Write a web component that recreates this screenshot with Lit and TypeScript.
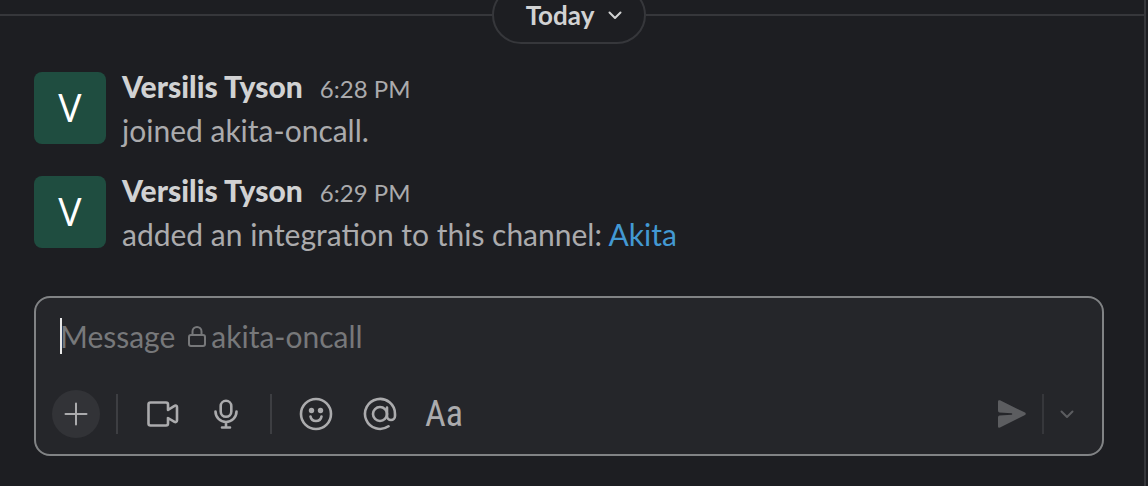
import { LitElement, html, css, svg } from "lit";
import { customElement, property, state } from "lit/decorators.js";

const icon = (width: number, height: number, body: unknown) => html`<svg width=${width} height=${height} viewBox="0 0 ${width} ${height}" fill="none" stroke="currentColor"
    stroke-width="3" stroke-linecap="round" stroke-linejoin="round" aria-hidden="true">${body}</svg>`;

const chevron = icon(16, 16, svg`<path stroke-width="2" d="M2.5 5.5 8 11l5.5-5.5"/>`);
const lock = icon(18, 22, svg`<g stroke-width="2"><rect x="1" y="10" width="16" height="11" rx="2"/><path d="M4.500 10V6.500a4.500 4.500 0 0 1 9 0V10"/></g>`);
const plus = icon(24, 24, svg`<path stroke-width="2" d="M12 1.500v21M1.500 12h21"/>`);
const video = icon(36, 32, svg`<path stroke-width="2.600" d="M6.500 4.500h15.500a2 2 0 0 1 2 2V12l6.500-4.200a1.600 1.600 0 0 1 2.500 1.300V22.500a1.600 1.600 0 0 1-2.500 1.300l-6.500-3.800v5.500a2 2 0 0 1-2 2H6.500a2 2 0 0 1-2-2v-19a2 2 0 0 1 2-2Z"/>`);
const mic = icon(28, 32, svg`<g stroke-width="2.600"><rect x="8.700" y="2.800" width="10.600" height="16" rx="5.300"/><path d="M3.500 13.500a10.500 10.500 0 0 0 21 0M14 24v5.500M10 29.500h8"/></g>`);
const smile = icon(36, 36, svg`<circle stroke-width="2.600" cx="18" cy="18" r="15"/><g fill="currentColor" stroke="none"><circle cx="13.500" cy="14.500" r="2.700"/><circle cx="22.500" cy="14.500" r="2.700"/></g><path stroke-width="2.600" d="M12.500 20.500a5.600 5.600 0 0 0 11 0"/>`);
const mention = icon(36, 36, svg`<g stroke-width="2.600"><circle cx="18" cy="18" r="7"/><path d="M25 11.500V20a4 4 0 0 0 8 0v-2a15 15 0 1 0-6.500 12.300"/></g>`);
const send = icon(30, 30, svg`<path fill="currentColor" stroke="none" d="M1 2.500C1 1.500 2 .900 3 1.300l25 12.300c1 .600 1 1.800 0 2.400L3 28.600c-1 .400-2-.200-2-1.200V18.500c0-1 .500-1.700 1.500-1.900l12-.800c1-.100 1-1.500 0-1.600l-12-.800C1.500 13.200 1 12.500 1 11.500Z"/>`);

@customElement("chat-message")
export class ChatMessage extends LitElement {
  @property() author = "";
  @property() time = "";

  static styles = css`
    :host { display: block; padding: 8px 34px; }
    .row { display: flex; gap: 16px; }
    .avatar {
      flex: none; display: grid; justify-items: center;
      width: 72px; height: 72px; margin-top: 8px; border-radius: 8px;
      background: #1f4d40; color: #fff; font: 400 39px/70px "Open Sans", sans-serif;
    }
    .content { min-width: 0; }
    .head { display: flex; align-items: baseline; gap: 17px; height: 44px; line-height: 44px; }
    .author { font-weight: 900; color: #d1d2d3; }
    .time { font-size: 24px; }
    .text { line-height: 44px; overflow-wrap: anywhere; }
  `;

  render() {
    return html`<article class="row">
      <div class="avatar" aria-hidden="true">${this.author.charAt(0)}</div>
      <div class="content">
        <div class="head"><span class="author">${this.author}</span><time class="time">${this.time}</time></div>
        <div class="text"><slot></slot></div>
      </div>
    </article>`;
  }
}

@customElement("message-composer")
export class MessageComposer extends LitElement {
  @property() channel = "";
  @state() private draft = "";

  static styles = css`
    :host { display: block; }
    .box { border: 2px solid #818385; border-radius: 16px; background: #25262a; }
    .entry { display: grid; padding: 16px 24px; }
    .input, .hint { grid-area: 1 / 1; font: inherit; line-height: 44px; }
    .input {
      width: 100%; height: 44px; box-sizing: border-box; padding: 0; border: 0; outline: 0;
      resize: none; background: transparent; color: #d1d2d3; overflow: hidden;
    }
    .hint { display: flex; align-items: center; color: #77787a; pointer-events: none; white-space: nowrap; }
    .hint svg { flex: none; margin: 0 5px 0 13px; }
    .caret { width: 2px; height: 36px; margin-right: -2px; background: #e8e8e8; }
    .tools { display: flex; align-items: center; padding: 16px 12px 16px 16px; }
    button {
      display: grid; place-items: center; width: 64px; height: 48px; padding: 0;
      border: 0; background: transparent; color: #ababad; font: inherit;
    }
    svg { display: block; }
    .add { width: 48px; border-radius: 50%; background: #323337; margin-right: 4px; }
    .rule { width: 2px; height: 40px; margin: 0 12px; background: #3d3e42; }
    .format { font: 400 36px/48px "Roboto Condensed", "Arial Narrow", Roboto, sans-serif; }
    .sending { display: flex; align-items: center; margin-left: auto; }
    .sending .rule { margin: 0; background: #36373b; }
    .sending button { color: #5c5d60; }
    .sending .send { width: 60px; }
    .sending .more { width: 46px; }
  `;

  private onInput(e: Event) {
    this.draft = (e.target as HTMLTextAreaElement).value;
  }

  render() {
    return html`<form class="box" @submit=${(e: Event) => e.preventDefault()}>
      <div class="entry">
        <textarea class="input" id="draft" rows="1" .value=${this.draft} @input=${this.onInput}></textarea>
        ${this.draft ? "" : html`<label class="hint" for="draft"><span class="caret"></span>Message ${lock}${this.channel}</label>`}
      </div>
      <div class="tools">
        <button type="button" class="add" aria-label="Attach">${plus}</button>
        <span class="rule"></span>
        <button type="button" aria-label="Record video clip">${video}</button>
        <button type="button" aria-label="Record audio clip">${mic}</button>
        <span class="rule"></span>
        <button type="button" aria-label="Emoji">${smile}</button>
        <button type="button" aria-label="Mention someone">${mention}</button>
        <button type="button" class="format" aria-label="Formatting">Aa</button>
        <div class="sending">
          <button type="submit" class="send" aria-label="Send now">${send}</button>
          <span class="rule"></span>
          <button type="button" class="more" aria-label="Schedule for later">${chevron}</button>
        </div>
      </div>
    </form>`;
  }
}

@customElement("app-root")
export class AppRoot extends LitElement {
  static styles = css`
    :host {
      display: block; min-height: 100vh; box-sizing: border-box; padding-right: 2px;
      overflow: hidden; background: #1d1e22; color: #ababad;
      font: 400 30px/44px Lato, sans-serif;
    }
    .pane { min-height: 100vh; box-sizing: border-box; border-right: 2px solid #36373b; display: flow-root; }
    .day { display: flex; align-items: center; margin: -14px 0 12px; }
    .day::before, .day::after { content: ""; flex: 1 1 0; height: 2px; background: #36373b; }
    .day::after { flex-basis: 6px; }
    .date {
      display: flex; align-items: center; gap: 13px; height: 58px; box-sizing: border-box; padding: 0 21px 0 32px;
      border: 2px solid #36373b; border-radius: 29px; background: transparent;
      color: #d1d2d3; font: 700 26px/28px Lato, sans-serif;
    }
    .link { color: #4399d3; text-decoration: none; }
    .composer { margin: 32px 40px 30px 34px; }
  `;

  render() {
    return html`<main class="pane">
      <div class="day"><button class="date" type="button">Today ${chevron}</button></div>
      <chat-message author="Versilis Tyson" time="6:28 PM">joined akita-oncall.</chat-message>
      <chat-message author="Versilis Tyson" time="6:29 PM">added an integration to this channel: <a class="link" href="#akita">Akita</a></chat-message>
      <message-composer class="composer" channel="akita-oncall"></message-composer>
    </main>`;
  }
}
